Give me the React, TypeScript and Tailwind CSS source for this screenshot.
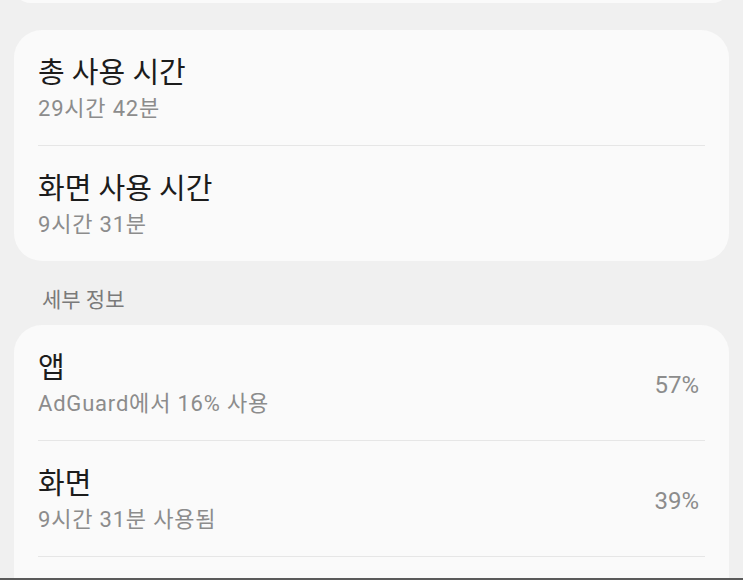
export default function App() {
  const font = { fontFamily: 'Roboto, "Noto Sans CJK KR", "Noto Sans", sans-serif' };
  return (
    <div className="relative h-[580px] w-[743px] overflow-hidden bg-[#f0f0f0]" style={font}>
      <div className="flex flex-col px-[14px]">
        {/* previous card, mostly scrolled out */}
        <div className="-mt-[30px] h-[33px] rounded-[28px] bg-[#fafafa]" />

        <div className="mt-[27px] rounded-[28px] bg-[#fafafa] px-[24px]">
          <div className="flex flex-col pt-[23px] pb-[20px]">
            <span className="text-[29px] leading-[40px] text-[#1c1c1c]">총 사용 시간</span>
            <span className="text-[22px] leading-[32px] tracking-[0.8px] text-[#8c8c8c]">29시간 42분</span>
          </div>
          <div className="h-px bg-[#e6e6e6]" />
          <div className="flex flex-col pt-[23px] pb-[20px]">
            <span className="text-[29px] leading-[40px] text-[#1c1c1c]">화면 사용 시간</span>
            <span className="text-[22px] leading-[32px] tracking-[0.8px] text-[#8c8c8c]">9시간 31분</span>
          </div>
        </div>

        <div className="px-[28px] pt-[24px] pb-[10px] text-[21px] leading-[30px] text-[#7a7a7a]">세부 정보</div>

        <div className="rounded-[28px] bg-[#fafafa] px-[24px]">
          <div className="flex items-center pt-[23px] pb-[20px]">
            <div className="flex flex-1 flex-col">
              <span className="text-[29px] leading-[40px] text-[#1c1c1c]">앱</span>
              <span className="text-[22px] leading-[32px] tracking-[0.8px] text-[#8c8c8c]">AdGuard에서 16% 사용</span>
            </div>
            <span className="pr-[6px] pt-[2px] text-[24px] text-[#8c8c8c]">57%</span>
          </div>
          <div className="h-px bg-[#e6e6e6]" />
          <div className="flex items-center pt-[23px] pb-[20px]">
            <div className="flex flex-1 flex-col">
              <span className="text-[29px] leading-[40px] text-[#1c1c1c]">화면</span>
              <span className="text-[22px] leading-[32px] tracking-[0.8px] text-[#8c8c8c]">9시간 31분 사용됨</span>
            </div>
            <span className="pr-[6px] pt-[2px] text-[24px] text-[#8c8c8c]">39%</span>
          </div>
          <div className="h-px bg-[#e6e6e6]" />
          <div className="h-[60px]" />
        </div>
      </div>
      <div className="absolute bottom-0 left-0 h-[2px] w-full bg-[#5a5a5a]" />
    </div>
  );
}
